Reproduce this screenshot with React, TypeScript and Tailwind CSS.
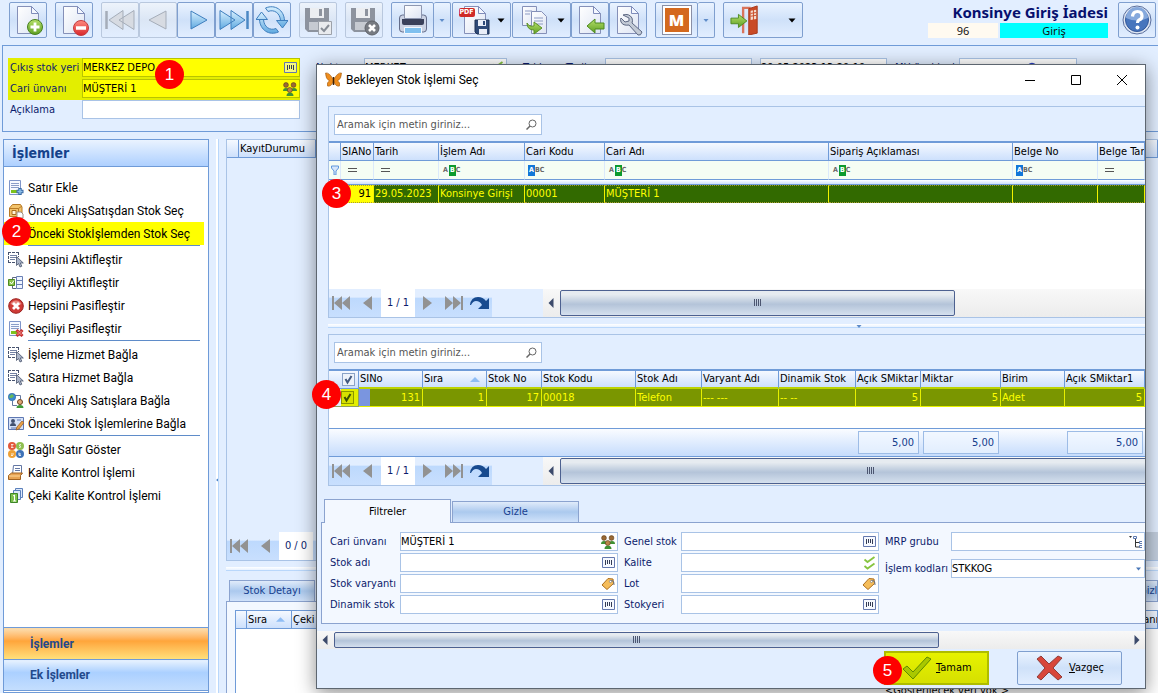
import { useState } from "react";
import type { ReactNode } from "react";

const tahoma = "font-['DejaVu_Sans_Condensed','DejaVu_Sans',sans-serif]";
const segoe = "font-['Noto_Sans','Open_Sans',sans-serif]";
const roboto = "font-[Roboto,'Open_Sans',sans-serif]";

/* ---------- toolbar icons ---------- */

function Svg({ children, size = 32 }: { children: ReactNode; size?: number }) {
  return (
    <svg width={size} height={size} viewBox="0 0 32 32" className="shrink-0" aria-hidden="true">
      <defs>
        <linearGradient id="paper" x1="0" y1="0" x2="1" y2="1">
          <stop offset="0" stopColor="#ffffff" />
          <stop offset="1" stopColor="#dde4f3" />
        </linearGradient>
        <linearGradient id="blue" x1="0" y1="0" x2="0" y2="1">
          <stop offset="0" stopColor="#d8f0ff" />
          <stop offset="1" stopColor="#5fa9e0" />
        </linearGradient>
        <linearGradient id="green" x1="0" y1="0" x2="0" y2="1">
          <stop offset="0" stopColor="#b5e06a" />
          <stop offset="1" stopColor="#5f9f22" />
        </linearGradient>
        <linearGradient id="red" x1="0" y1="0" x2="0" y2="1">
          <stop offset="0" stopColor="#ff8a80" />
          <stop offset="1" stopColor="#d8262a" />
        </linearGradient>
      </defs>
      {children}
    </svg>
  );
}

const Page = () => (
  <>
    <path d="M5.500 2.500h14l7 7v20h-21z" fill="url(#paper)" stroke="#8590b8" />
    <path d="M19.500 2.500v7h7z" fill="#f4f7ff" stroke="#7f8cba" />
  </>
);

const NewIcon = () => (
  <Svg>
    <Page />
    <circle cx="23" cy="23" r="7.500" fill="url(#green)" stroke="#467f1e" />
    <path d="M23 18.500v9M18.500 23h9" stroke="#fff" strokeWidth="2.800" />
  </Svg>
);

const DeleteIcon = () => (
  <Svg>
    <Page />
    <circle cx="23" cy="24" r="7.500" fill="url(#red)" stroke="#c33b40" />
    <path d="M18 24h10" stroke="#fff" strokeWidth="3.500" />
  </Svg>
);

const FirstIcon = () => (
  <Svg>
    <path d="M2.500 7v18" stroke="#a5adb9" strokeWidth="2.500" />
    <path d="M5 16L19 6.500v19zM15 16L30 6.500v19z" fill="#d7dbe2" stroke="#a5adb9" />
  </Svg>
);

const PrevIcon = () => (
  <Svg>
    <path d="M7 16L24 7v18z" fill="#d7dbe2" stroke="#a5adb9" />
  </Svg>
);

const NextIcon = () => (
  <Svg>
    <path d="M27 16L11 7v18z" fill="url(#blue)" stroke="#3f7fbe" />
  </Svg>
);

const LastIcon = () => (
  <Svg>
    <path d="M29.500 7v18" stroke="#4c88c4" strokeWidth="2.500" />
    <path d="M17 16L2 6.500v19zM27 16L13 6.500v19z" fill="url(#blue)" stroke="#3f7fbe" />
  </Svg>
);

const RefreshIcon = () => (
  <Svg>
    <path d="M3 15.500h4.500C8 23 14 27 20 24.500l2.500 3.500C13 32 4 26 3.500 15.500H0L5.500 8l6 7.500z" fill="url(#blue)" stroke="#3f7fbe" />
    <path d="M29 16.500h-4.500C24 9 18 5 12 7.500L9.500 4C19 0 28 6 28.500 16.500H32L26.500 24l-6-7.500z" fill="url(#blue)" stroke="#3f7fbe" />
  </Svg>
);

const Floppy = () => (
  <>
    <path d="M3 4h24v24H6l-3-3z" fill="#8d939e" />
    <path d="M8 4h14v10H8z" fill="#eceef1" />
    <path d="M17 5h3v7h-3z" fill="#8d939e" />
    <path d="M7 18h16v8H7z" fill="#c6cad1" />
  </>
);

const SaveIcon = () => (
  <Svg>
    <Floppy />
    <path d="M16.500 17.500h13v13h-13z" fill="#e9ebee" stroke="#9da2aa" />
    <path d="M19 24l3 3 5-6" fill="none" stroke="#878d96" strokeWidth="2" />
  </Svg>
);

const SaveCloseIcon = () => (
  <Svg>
    <Floppy />
    <circle cx="24" cy="24" r="7" fill="#777b82" stroke="#5f636a" />
    <path d="M21 21l6 6M27 21l-6 6" stroke="#fff" strokeWidth="2.600" />
  </Svg>
);

const PrintIcon = () => (
  <Svg>
    <path d="M2.500 14q0-3 3-3h21q3 0 3 3v11q0 3-3 3h-21q-3 0-3-3z" fill="#cbd2e3" stroke="#636c8a" />
    <path d="M7.500 1.500h17v13h-17z" fill="url(#paper)" stroke="#8e97b0" />
    <path d="M5 15h22v4q0 2-2 2H7q-2 0-2-2z" fill="#39405a" />
    <path d="M7.500 23.500h17v6h-17z" fill="#7fc0ef" stroke="#f4f8ff" />
  </Svg>
);

const PdfIcon = () => (
  <span className="relative">
    <Svg>
      <Page />
      <path d="M16 16h14v14H18l-2-2z" fill="#2f4a78" stroke="#1f3255" />
      <path d="M19 16h8v6h-8zM20 25h8v5h-8z" fill="#e9eef8" />
      <path d="M24 17h2v4h-2z" fill="#2f4a78" />
    </Svg>
    <span className="absolute top-1 left-0 rounded-xs bg-[#cf2a27] px-px text-[7px] leading-[9px] font-bold text-white">
      PDF
    </span>
  </span>
);

const CopyIcon = () => (
  <Svg>
    <path d="M3.500 2.500h14v19h-14z" fill="url(#paper)" stroke="#8590b8" />
    <path d="M12.500 7.500h10l5 5v17h-15z" fill="url(#paper)" stroke="#8590b8" />
    <path d="M6 7h7M6 10h5M15 14h9M15 17h9M15 20h9" stroke="#8c9bc4" />
    <path d="M8 19q2 4 7 3v-4l8 6-8 6v-4q-7 0-7-7z" fill="url(#green)" stroke="#5c9127" />
  </Svg>
);

const ImportIcon = () => (
  <Svg>
    <Page />
    <path d="M13 22l8-7v4h9v6h-9v4z" fill="url(#green)" stroke="#4d8a20" />
  </Svg>
);

const WrenchIcon = () => (
  <Svg>
    <Page />
    <path
      d="M11 11q6-2 9 3 1 3 0 5l10 9q-1 4-4 3l-9-10q-6 1-8-3-1-3 0-4l4 4 4-1 0-3z"
      fill="#c3cad6"
      stroke="#5d6883"
    />
  </Svg>
);

const ExitIcon = () => (
  <Svg size={30}>
    <path d="M14 30V3h8" fill="none" stroke="#d9745c" strokeWidth="2.500" />
    <path d="M20 4l9-3v29l-9 2z" fill="#c94a26" stroke="#a5371a" />
    <path d="M22 6l6-1v10l-6 1z" fill="#f4dccf" />
    <path d="M25 5v11M22 9l6-1M22 12l6-1" stroke="#c94a26" />
    <path d="M1 14h8v-4l9 7-9 7v-4H1z" fill="url(#green)" stroke="#4d8a20" />
  </Svg>
);

const HelpIcon = () => (
  <Svg>
    <circle cx="16" cy="16" r="14" fill="#dfe6f2" stroke="#5a6f9e" />
    <circle cx="16" cy="16" r="11.500" fill="#4775bd" stroke="#32579a" />
    <path d="M5 14a11 11 0 0 1 22 0q-11 5-22 0z" fill="#85a8dc" />
    <path d="M11.500 12.500q.5-5 5-5t4.500 4.500q0 3-3 4-1.500.800-1.500 3" fill="none" stroke="#fff" strokeWidth="3.200" />
    <circle cx="16.500" cy="23.500" r="2" fill="#fff" />
  </Svg>
);

/* ---------- small icons ---------- */

function Small({ children }: { children: ReactNode }) {
  return (
    <svg width="16" height="16" viewBox="0 0 16 16" className="shrink-0" aria-hidden="true">
      {children}
    </svg>
  );
}

const ListLines = () => (
  <>
    <path d="M1.500.500h11v14h-11z" fill="#f7f9ff" stroke="#7f95c9" />
    <path d="M3 3.500h8M3 5.500h8M3 7.500h8" stroke="#8b9dc8" />
    <path d="M3 10h6v3H3z" fill="#7dc21e" />
  </>
);

const smallIcons: Record<string, ReactNode> = {
  add: (
    <Small>
      <ListLines />
      <path d="M12 8v7M8.500 11.500h7" stroke="#3b6ba6" strokeWidth="3.400" />
      <path d="M12 9v5M9.500 11.500h5" stroke="#8fc0ea" strokeWidth="1.400" />
    </Small>
  ),
  box: (
    <Small>
      <path d="M1.500 5l3-3.500h8L14 4v9.500H1.500z" fill="#f2c36b" stroke="#b87a25" />
      <path d="M1.500 5.500h9v8M10.500 5.500L14 3" fill="none" stroke="#b87a25" />
      <path d="M4 7.500h4v4H4z" fill="#fff4d8" stroke="#a76c1f" />
      <path d="M9 9h4l2 2v4H9z" fill="#fff" stroke="#9a8f86" />
    </Small>
  ),
  select: (
    <Small>
      <path d="M0 .500h11M.500 0v10M0 10.500h7M10.500 0v5" stroke="#47536f" strokeDasharray="3 1" fill="none" />
      <path d="M2 3.500h7M2 5.500h7M2 7.500h5" stroke="#7381a3" />
      <path d="M8.500 4.500v9l2-2 1.500 3.500 1.800-.800-1.500-3.200h3z" fill="#aab4c8" stroke="#48536c" strokeWidth=".8" />
    </Small>
  ),
  active: (
    <Small>
      <path d="M8.500 1.500h6v12h-6zM8.500 5.500h6M8.500 9.500h6" fill="#eef4ff" stroke="#6a80b5" />
      <path d="M8 2.500H4.500v3M8 13.500H4.500v-3" fill="none" stroke="#5c6880" />
      <path d="M.500 4.500h6v6h-6z" fill="#8bc34a" stroke="#4e8a1f" />
      <path d="M2 7l1.500 2L6 5.500" fill="none" stroke="#fff" />
    </Small>
  ),
  cancel: (
    <Small>
      <circle cx="8" cy="8" r="7.300" fill="#cf3b36" stroke="#9c2220" />
      <path d="M2.500 6a6 6 0 0 1 11 0q-5 3-11 0z" fill="#e98880" />
      <path d="M5 5l6 6M11 5l-6 6" stroke="#fff" strokeWidth="2.800" />
    </Small>
  ),
  remove: (
    <Small>
      <ListLines />
      <path d="M8.500 9l6 6M14.500 9l-6 6" stroke="#c83232" strokeWidth="3" />
      <path d="M9.500 10l4 4M13.500 10l-4 4" stroke="#f39a92" />
    </Small>
  ),
  globe: (
    <Small>
      <path d="M4.500 8v4.500H9M7 2.500h5.500V6" fill="none" stroke="#64789f" />
      <circle cx="4" cy="4" r="3.700" fill="#3a8ad0" stroke="#2761a0" strokeWidth=".6" />
      <path d="M1.500 3l2.500-2 2 2-2 2-2.500 0z" fill="#68b85a" />
      <circle cx="12" cy="9" r="2.500" fill="#e0a776" stroke="#6a4020" />
      <path d="M8.500 15q0-3 3.500-3t3.500 3z" fill="#3f9a3a" />
    </Small>
  ),
  card: (
    <Small>
      <path d="M.500 1.500h15v12H.500z" fill="#d5e1f7" stroke="#5e78b3" />
      <circle cx="5" cy="5" r="2" fill="#41506f" />
      <path d="M2 10q0-3 3-3t3 3z" fill="#41506f" />
      <path d="M3 12h6M9 4h4" stroke="#5e78b3" />
      <path d="M8 14l1-3 5-6 2 1.500-5 6.500z" fill="#e8a24a" stroke="#94561c" strokeWidth=".7" />
    </Small>
  ),
  coins: (
    <Small>
      <circle cx="4" cy="4" r="4" fill="#e2583a" />
      <circle cx="12" cy="4" r="4" fill="#8fbf4f" />
      <circle cx="4" cy="12" r="4" fill="#efa136" />
      <circle cx="12" cy="12" r="4" fill="#3f73b8" />
      <path d="M3 2.500h2.500M3 4h2M3 5.500h2.500M11 5.500q3 0 1-1.500t1-1.500M3 12h3M3 13.500h2M11 10.500v3h2M10.500 12H13" fill="none" stroke="#fff" strokeWidth=".8" />
    </Small>
  ),
  tray: (
    <Small>
      <path d="M5.500.500h8v9h-9z" fill="#fff" stroke="#6377a4" />
      <path d="M7 3.500h5M7 5.500h5" stroke="#6377a4" />
      <path d="M.500 10.500l3-2.500h11l-2 2.500v4H.500z" fill="#e7a252" stroke="#a1611f" />
      <path d="M1 11h11" stroke="#ffd99a" />
    </Small>
  ),
  stack: (
    <Small>
      <path d="M7.500.500h7v9h-7z" fill="#dce8fb" stroke="#5b80bb" />
      <path d="M5.500 2.500h7v9h-7z" fill="#dce8fb" stroke="#5b80bb" />
      <path d="M2.500 5.500h7v9h-7z" fill="#7cc04c" stroke="#3d8627" />
      <path d="M5 8l1.500-1v6M5 13h3" fill="none" stroke="#fff" />
    </Small>
  ),
  barcode: (
    <svg width="14" height="12" viewBox="0 0 14 12" aria-hidden="true">
      <path d="M1.500.500h12v10H1.500z" fill="#eef3ff" fillOpacity=".5" stroke="#6478ae" />
      <path d="M4.500 3v5M6.500 3v4M8.500 3v4M10.500 3v5" stroke="#343c55" />
    </svg>
  ),
  people: (
    <svg width="14" height="14" viewBox="0 0 14 14" aria-hidden="true">
      <circle cx="3" cy="3" r="2.400" fill="#9a6a35" stroke="#5e3c17" strokeWidth=".6" />
      <circle cx="10.500" cy="3" r="2.400" fill="#9a6a35" stroke="#5e3c17" strokeWidth=".6" />
      <path d="M0 9q0-3 3-3t3 3zM8 9q0-3 3-3t3 3zM3.500 14q0-3.500 3.500-3.500t3.500 3.500z" fill="#3f9133" />
      <circle cx="6.800" cy="8" r="2.500" fill="#b98347" stroke="#5e3c17" strokeWidth=".6" />
    </svg>
  ),
  tag: (
    <svg width="14" height="14" viewBox="0 0 14 14" aria-hidden="true">
      <path d="M1 8l6-6.500 5 .500.500 4.500L6 12.500z" fill="#f5bd5b" stroke="#ad6f1e" />
      <path d="M9 4q4-2 4 4" fill="none" stroke="#666f80" />
      <circle cx="9.500" cy="4.500" r="1.100" fill="#fff" stroke="#666f80" strokeWidth=".6" />
    </svg>
  ),
  checks: (
    <svg width="13" height="14" viewBox="0 0 13 14" aria-hidden="true">
      <path d="M1.500 3.500l3 2.500 7-5M1.500 10l3 2.500 7-5" fill="none" stroke="#87c540" strokeWidth="1.800" />
    </svg>
  ),
  tree: (
    <svg width="14" height="14" viewBox="0 0 14 14" aria-hidden="true">
      <path d="M1 1h3L2.500 3z" fill="#333" />
      <path d="M7.500 4v8H12M7.500 7.500H12" fill="none" stroke="#333" />
      <path d="M5.500 1.500h3v2h-3zM11.500 6.500h3v2h-3zM11.500 10.500h3v2h-3z" fill="#fff" stroke="#5b78b0" />
    </svg>
  ),
  combo: (
    <svg width="7" height="14" viewBox="0 0 7 14" aria-hidden="true">
      <path d="M1 5.500h5L3.500 8.500z" fill="#4a78b8" />
    </svg>
  ),
  lookup: (
    <svg width="48" height="12" viewBox="0 0 48 12" aria-hidden="true">
      <circle cx="6" cy="6" r="4.500" fill="#fff" stroke="#2a3fc0" strokeWidth="1.500" />
      <circle cx="6" cy="6" r="1.500" fill="none" stroke="#2a3fc0" />
      <path d="M18.500 2.500h9v8h-9z" fill="#7fb0dc" stroke="#46617f" />
    </svg>
  ),
};

/* ---------- shared pieces ---------- */

function Caret({ dark = false }: { dark?: boolean }) {
  return (
    <svg width="8" height="5" viewBox="0 0 8 5" className={dark ? "text-black" : "text-[#5f8cc9]"} aria-hidden="true">
      {dark ? <path d="M.500.500h7L4 4.500z" fill="currentColor" /> : <path d="M1.500 1h5L4 4z" fill="currentColor" />}
    </svg>
  );
}

const toolFrame = "flex h-9 items-center rounded-xs border";
const toolOn = "border-[#7f9fcf] bg-linear-to-b from-[#eaf3ff] via-[#cfe1f9] to-[#e2eeff]";
const toolOff = "border-[#b9c8de] bg-linear-to-b from-[#edf3fb] via-[#dbe6f5] to-[#e2eeff]";

function Tool({ label, off, children }: { label: string; off?: boolean; children: ReactNode }) {
  return (
    <button type="button" aria-label={label} className={`${toolFrame} w-[38px] justify-center ${off ? toolOff : toolOn}`}>
      {children}
    </button>
  );
}

function SplitTool({ label, children }: { label: string; children: ReactNode }) {
  return (
    <div className="flex">
      <button type="button" aria-label={label} className={`${toolFrame} w-[43px] justify-center ${toolOn}`}>
        {children}
      </button>
      <button type="button" aria-label={`${label} menu`} className={`${toolFrame} w-[17px] justify-center border-l-0 ${toolOn}`}>
        <Caret />
      </button>
    </div>
  );
}

function Badge({ n, className }: { n: number; className: string }) {
  return (
    <span
      className={`absolute z-30 flex size-[29px] items-center justify-center rounded-full bg-[#fe0000] font-['Liberation_Sans',sans-serif] text-[17px] leading-none text-white ${className}`}
    >
      {n}
    </span>
  );
}

function Field({
  id,
  label,
  icon,
  value = "",
  labelClass = "w-[70px]",
  marked,
}: {
  id: string;
  label: string;
  icon?: string;
  value?: string;
  labelClass?: string;
  marked?: boolean;
}) {
  return (
    <div className={`flex h-[21px] items-start ${marked ? "bg-[#e3ee00]" : ""}`}>
      <label htmlFor={id} className={`shrink-0 leading-[19px] whitespace-nowrap text-[#0c1c6c] ${labelClass}`}>
        {label}
      </label>
      <div
        className={`flex h-[19px] min-w-0 flex-1 items-center border pr-0.5 ${
          marked ? "border-[#b8c400] bg-[#ffff00]" : "border-[#a9c3e6] bg-white"
        }`}
      >
        <input id={id} defaultValue={value} className="h-full min-w-0 flex-1 bg-transparent text-black outline-none" />
        {icon && smallIcons[icon]}
      </div>
    </div>
  );
}

function Search({ id }: { id: string }) {
  return (
    <div className="mt-[7px] mb-[6px] ml-[5px] flex h-[21px] w-52 items-center border border-[#a9c3e6] bg-white pr-1">
      <input
        id={id}
        aria-label="Aramak için metin giriniz"
        placeholder="Aramak için metin giriniz..."
        className="min-w-0 flex-1 px-0.5 outline-none placeholder:text-[#555]"
      />
      <svg width="11" height="11" viewBox="0 0 11 11" aria-hidden="true">
        <circle cx="6.500" cy="4.500" r="3.500" fill="none" stroke="#666" />
        <path d="M4 7L.500 10.500" stroke="#666" strokeWidth="1.500" />
      </svg>
    </div>
  );
}

const navFill = "bg-linear-to-b from-[#e2eeff] from-30% via-[#bdd9fd] via-31% to-[#c8dffe]";

function NavGlyph({ d }: { d: string }) {
  return (
    <svg width="20" height="16" viewBox="0 0 20 16" aria-hidden="true">
      <path d={d} fill="#929292" />
    </svg>
  );
}

function Pager({ text }: { text: string }) {
  return (
    <div className="flex h-7 w-[163px] shrink-0">
      <div className={`flex w-[52px] items-center gap-2 pl-0.5 ${navFill}`}>
        <button type="button" aria-label="İlk"><NavGlyph d="M1 1h2v14H1zM3 8l8-7v14zM11 8l8-7v14z" /></button>
        <button type="button" aria-label="Önceki"><NavGlyph d="M4 8l9-7v14z" /></button>
      </div>
      <div className="flex w-[34px] items-center justify-center bg-white text-[#0c1c6c]">{text}</div>
      <div className={`flex w-[77px] items-center gap-1.5 pl-[3px] ${navFill}`}>
        <button type="button" aria-label="Sonraki"><NavGlyph d="M14 8L5 1v14z" /></button>
        <button type="button" aria-label="Son"><NavGlyph d="M17 1h2v14h-2zM17 8L9 1v14zM9 8L1 1v14z" /></button>
        <button type="button" aria-label="Git">
          <svg width="20" height="14" viewBox="0 0 20 14" aria-hidden="true">
            <path d="M0 9Q1 1 8 1q5 0 8 4l3-3v11H8l4-4Q10 5 6 5 3 5 1 9z" fill="#174a8f" />
          </svg>
        </button>
      </div>
    </div>
  );
}

function Thumb({ className }: { className: string }) {
  return (
    <div
      className={`flex items-center justify-center rounded-xs border border-[#4d6190] bg-linear-to-b from-[#e6ebf0] from-15% via-[#b4c4d9] via-55% to-[#d5e0ee] ${className}`}
    >
      <svg width="8" height="8" viewBox="0 0 8 8" aria-hidden="true">
        <path d="M.500 0v7M2.500 0v7M4.500 0v7M6.500 0v7" stroke="#4b5570" />
      </svg>
    </div>
  );
}

function Arrow({ right }: { right?: boolean }) {
  return (
    <svg width="6" height="10" viewBox="0 0 6 10" aria-hidden="true">
      <path d={right ? "M.500 0v10L5.500 5z" : "M5.500 0v10L.500 5z"} fill="#3c4a6b" />
    </svg>
  );
}

function GridScroll({ full }: { full?: boolean }) {
  return (
    <div className="ml-[51px] flex min-w-0 flex-1 items-center bg-linear-to-b from-[#f8f8f8] to-[#ececec] pl-[5px]">
      <div className="mr-[6px] flex shrink-0">
        <Arrow />
      </div>
      <Thumb className={full ? "h-[26px] w-[622px] shrink-0" : "h-[26px] w-[395px] shrink-0"} />
    </div>
  );
}

function Splitter({ arrow }: { arrow?: boolean }) {
  return (
    <div className="my-1.5 flex h-1 justify-center border-b border-[#b9d7fb] bg-linear-to-b from-white to-[#e8f2ff]">
      {arrow && (
        <span className="ml-[245px] flex">
          <Caret />
        </span>
      )}
    </div>
  );
}

const th = "h-[18px] overflow-hidden border-r border-b border-[#6f9bd8] p-0 pl-px text-left font-normal whitespace-nowrap bg-linear-to-b from-[#f5f9ff] to-[#cde0fc]";

function FilterMark({ kind }: { kind: string }) {
  if (kind === "eq") {
    return <span className="ml-[5px] block h-1 w-[9px] border-y border-[#555]" />;
  }
  return (
    <span className="ml-px flex items-center text-[7px] leading-[11px] font-bold text-[#666]">
      <span className={kind === "a" ? "bg-[#1277d8] px-px text-white" : "px-px"}>A</span>
      <span className={kind === "b" ? "bg-[#0b9a2c] px-px text-white" : ""}>B</span>
      <span>C</span>
    </span>
  );
}

const pendingCols = [
  { w: "w-[12px]", name: "", filter: "", value: "" },
  { w: "w-[33px]", name: "SIANo", filter: "eq", value: "91" },
  { w: "w-[65px]", name: "Tarih", filter: "eq", value: "29.05.2023" },
  { w: "w-[86px]", name: "İşlem Adı", filter: "b", value: "Konsinye Girişi" },
  { w: "w-[80px]", name: "Cari Kodu", filter: "a", value: "00001" },
  { w: "w-[224px]", name: "Cari Adı", filter: "b", value: "MÜŞTERİ 1" },
  { w: "w-[184px]", name: "Sipariş Açıklaması", filter: "b", value: "" },
  { w: "w-[85px]", name: "Belge No", filter: "a", value: "" },
  { w: "", name: "Belge Tarihi", filter: "eq", value: "" },
];

function PendingTable() {
  return (
    <table className="w-full table-fixed border-separate border-spacing-0 border-t-2 border-[#6f9bd8]">
      <colgroup>
        {pendingCols.map((c) => (
          <col key={c.name} className={c.w} />
        ))}
      </colgroup>
      <thead>
        <tr>
          {pendingCols.map((c) => (
            <th key={c.name} className={th}>{c.name}</th>
          ))}
        </tr>
        <tr>
          {pendingCols.map((c) => (
            <td key={c.name} className="h-[19px] border-r border-b border-r-[#dbe9fb] border-b-[#6f9bd8] bg-[#f5fdf4] p-0 pl-0.5">
              {c.filter ? (
                <FilterMark kind={c.filter} />
              ) : (
                <svg width="8" height="10" viewBox="0 0 8 10" aria-hidden="true">
                  <path d="M.500 1h7v2L5 6v4H3V6L.500 3z" fill="#d5e6fb" stroke="#5f97dc" />
                </svg>
              )}
            </td>
          ))}
        </tr>
        <tr>
          <td colSpan={9} className="h-[5px] border-b border-[#6f9bd8] bg-linear-to-b from-white to-[#cde0fc] p-0" />
        </tr>
      </thead>
      <tbody>
        <tr>
          {pendingCols.map((c, i) => (
            <td
              key={c.name}
              className={`h-[18px] overflow-hidden border-r border-y border-y-[#a89a30] border-r-[#f2f200] border-dotted [border-right-style:solid] p-0 whitespace-nowrap ${
                i < 2 ? "bg-[#ffff00] pr-0.5 text-right text-black" : "bg-[#326a00] pl-px text-[#ffff00]"
              }`}
            >
              {c.value}
            </td>
          ))}
        </tr>
      </tbody>
    </table>
  );
}

const stockCols = [
  { w: "w-[64px]", name: "SINo", value: "131", right: true },
  { w: "w-[64px]", name: "Sıra", value: "1", right: true },
  { w: "w-[55px]", name: "Stok No", value: "17", right: true },
  { w: "w-[94px]", name: "Stok Kodu", value: "00018" },
  { w: "w-[66px]", name: "Stok Adı", value: "Telefon" },
  { w: "w-[77px]", name: "Varyant Adı", value: "--- ---" },
  { w: "w-[77px]", name: "Dinamik Stok", value: "-- --" },
  { w: "w-[65px]", name: "Açık SMiktar", value: "5", right: true, total: "5,00" },
  { w: "w-[80px]", name: "Miktar", value: "5", right: true, total: "5,00" },
  { w: "w-[64px]", name: "Birim", value: "Adet" },
  { w: "", name: "Açık SMiktar1", value: "5", right: true, total: "5,00" },
];

function Tick({ label, marked }: { label: string; marked?: boolean }) {
  const [checked, setChecked] = useState(true);
  return (
    <span className="relative ml-3 block size-[13px]">
      <input
        type="checkbox"
        aria-label={label}
        checked={checked}
        onChange={(e) => setChecked(e.target.checked)}
        className={`absolute inset-0 size-[13px] appearance-none border ${
          marked ? "border-[#8a9600] bg-[#d6e000]" : "border-[#8ba3c7] bg-[#eef3fa]"
        }`}
      />
      {checked && (
        <svg width="13" height="13" viewBox="0 0 13 13" className="pointer-events-none absolute inset-0" aria-hidden="true">
          <path d="M3.500 6l2 3.500L9.500 3" fill="none" stroke={marked ? "#3b5200" : "#42597f"} strokeWidth="2" />
        </svg>
      )}
    </span>
  );
}

function StockTable() {
  return (
    <table className="w-full table-fixed border-separate border-spacing-0 border-t-2 border-[#6f9bd8]">
      <colgroup>
        <col className="w-[30px]" />
        {stockCols.map((c) => (
          <col key={c.name} className={c.w} />
        ))}
      </colgroup>
      <thead>
        <tr>
          <th className={th}><Tick label="Tümünü seç" /></th>
          {stockCols.map((c) => (
            <th key={c.name} className={`${th} border-b-2 border-b-[#bcd300]`}>
              <span className="flex items-center justify-between">
                {c.name}
                {c.name === "Sıra" && (
                  <svg width="10" height="5" viewBox="0 0 10 5" className="mr-1.5" aria-hidden="true">
                    <path d="M0 5l5-5 5 5z" fill="#8fbdf5" />
                  </svg>
                )}
              </span>
            </th>
          ))}
        </tr>
      </thead>
      <tbody>
        <tr>
          <td className="h-[18px] border-r border-b border-[#8f9f60] bg-linear-to-r from-[#e2eeff] from-[12px] to-[#e3ee00] to-[12px] p-0">
            <Tick label="Satırı seç" marked />
          </td>
          {stockCols.map((c, i) => (
            <td
              key={c.name}
              className={`overflow-hidden border-r border-b border-[#e6f000] p-0 whitespace-nowrap text-[#ffff00] ${
                i === 0 ? "bg-linear-to-r from-[#7a95df] from-[11px] to-[#7a9600] to-[11px]" : "bg-[#7a9600]"
              } ${c.right ? "pr-0.5 text-right" : "pl-px"}`}
            >
              {c.value}
            </td>
          ))}
        </tr>
        <tr>
          <td colSpan={12} className="h-[21px] bg-white p-0" />
        </tr>
      </tbody>
      <tfoot>
        <tr>
          {[{ name: "", total: "" }, ...stockCols].map((c) => (
            <td key={c.name} className="h-[29px] border-y border-[#6f9bd8] bg-linear-to-b from-[#fafcff] to-[#c6dcfc] p-0">
              {c.total && (
                <span className="mx-0.5 block h-[23px] border border-[#9dbce6] bg-[#f0f6ff]/60 pr-1 text-right text-[11px] leading-[21px] text-[#143c8c]">
                  {c.total}
                </span>
              )}
            </td>
          ))}
        </tr>
      </tfoot>
    </table>
  );
}

/* ---------- dialog ---------- */

function Dialog() {
  return (
    <section
      role="dialog"
      aria-label="Bekleyen Stok İşlemi Seç"
      className="absolute top-16 right-3 left-[316px] z-20 border border-[#5d6670] bg-[#e2eeff] shadow-[0_4px_18px_rgba(0,0,0,0.45)]"
    >
      <header className={`flex h-[30px] items-center bg-white ${roboto} text-xs text-black`}>
        <svg width="17" height="16" viewBox="0 0 17 16" className="mr-1 ml-2" aria-hidden="true">
          <path d="M8 7Q4 0 .500 1q0 6 4 8-3 1-2 5 4 1 6-5 2 6 6 5 1-4-2-5 4-2 4-8Q13 0 9 7z" fill="#ef8d1c" stroke="#a05a14" strokeWidth=".6" />
          <path d="M8.500 5v8" stroke="#3c2208" strokeWidth="1.500" />
        </svg>
        <h2 className="flex-1">Bekleyen Stok İşlemi Seç</h2>
        <div className="mr-[17px] flex gap-[34px]">
          <button type="button" aria-label="Simge durumuna küçült">
            <svg width="12" height="12" viewBox="0 0 12 12"><path d="M1 6.500h10" stroke="#000" /></svg>
          </button>
          <button type="button" aria-label="Ekranı kapla">
            <svg width="12" height="12" viewBox="0 0 12 12"><path d="M1.500 1.500h9v9h-9z" fill="none" stroke="#000" /></svg>
          </button>
          <button type="button" aria-label="Kapat">
            <svg width="12" height="12" viewBox="0 0 12 12"><path d="M1 1l10 10M11 1L1 11" stroke="#000" /></svg>
          </button>
        </div>
      </header>

      <div className="overflow-hidden">
        <div className="pt-[11px] pl-[11px]">
          <div className="border-y border-l border-[#a9c3e6]">
            <Search id="search-pending" />
            <PendingTable />
            <div className="h-[86px] bg-white" />
            <div className="flex">
              <Pager text="1 / 1" />
              <GridScroll />
            </div>
          </div>
          <Splitter arrow />
          <div className="border-y border-l border-[#a9c3e6]">
            <Search id="search-stock" />
            <StockTable />
            <div className="flex">
              <Pager text="1 / 1" />
              <GridScroll full />
            </div>
          </div>
        </div>

        <div className="mt-[13px] pl-1">
          <div className="flex items-end pl-[3px]" role="tablist">
            <button type="button" role="tab" aria-selected="true" className="relative z-10 -mb-px h-6 w-[127px] border border-b-0 border-[#8ba3cf] bg-[#f3f8ff] text-black">
              Filtreler
            </button>
            <button type="button" role="tab" aria-selected="false" className="ml-px h-[21px] w-[127px] border border-b-0 border-[#8ba3cf] bg-linear-to-b from-[#e0ebfa] via-[#abc9ee] to-[#d0e2fa] text-[#17418f]">
              Gizle
            </button>
          </div>
          <form className="flex h-[102px] gap-1.5 border-y border-l border-[#8ba3cf] bg-[#f3f8ff] pt-[9px] pl-2">
            <div className="w-72 shrink-0">
              <Field id="f-cari" label="Cari ünvanı" value="MÜŞTERİ 1" icon="people" />
              <Field id="f-stok" label="Stok adı" icon="barcode" />
              <Field id="f-varyant" label="Stok varyantı" icon="tag" />
              <Field id="f-dinamik" label="Dinamik stok" icon="barcode" />
            </div>
            <div className="w-[255px] shrink-0">
              <Field id="f-genel" label="Genel stok" labelClass="w-[57px]" icon="barcode" />
              <Field id="f-kalite" label="Kalite" labelClass="w-[57px]" icon="checks" />
              <Field id="f-lot" label="Lot" labelClass="w-[57px]" icon="tag" />
              <Field id="f-yer" label="Stokyeri" labelClass="w-[57px]" icon="barcode" />
            </div>
            <div className="flex min-w-0 flex-1 flex-col gap-1.5">
              <Field id="f-mrp" label="MRP grubu" labelClass="w-[66px]" icon="tree" />
              <Field id="f-kod" label="İşlem kodları" labelClass="w-[66px]" value="STKKOG" icon="combo" />
            </div>
          </form>
        </div>

        <div className="mt-[7px] flex h-[18px] items-center bg-linear-to-b from-[#f8f8f8] to-[#ececec] px-[5px]">
          <Arrow />
          <Thumb className="ml-1.5 h-4 w-[605px]" />
          <span className="ml-auto"><Arrow right /></span>
        </div>

        <div className="flex justify-end gap-7 pt-0.5 pr-[23px] pb-[3px]">
          <button type="button" className="flex h-[34px] w-[105px] items-center gap-1 border-2 border-[#aebc00] bg-linear-to-b from-[#e6f200] to-[#d6e000] pl-4 text-black">
            <svg width="30" height="26" viewBox="0 0 30 26" aria-hidden="true">
              <path d="M1 14l4-3 6 6L25 2l4 2-18 20z" fill="#a9c800" stroke="#5e8a00" />
            </svg>
            <span><u>T</u>amam</span>
          </button>
          <button type="button" className="flex h-[34px] w-[105px] items-center gap-1.5 rounded-xs border border-[#7f9fcf] bg-linear-to-b from-[#eaf3ff] via-[#cfe1f9] to-[#e2eeff] pl-[18px] text-black">
            <svg width="27" height="26" viewBox="0 0 27 26" aria-hidden="true">
              <path d="M1 4l4-3 8 8 9-8 4 2-9 10 9 9-4 3-9-8-8 8-4-3 8-9z" fill="#d8463a" stroke="#8f3c38" />
            </svg>
            <span><u>V</u>azgeç</span>
          </button>
        </div>
      </div>
      <Badge n={3} className="top-[114px] left-[5px]" />
      <Badge n={4} className="top-[315px] left-[-5px]" />
      <Badge n={5} className="right-[243px] bottom-[3px]" />
    </section>
  );
}

/* ---------- sidebar ---------- */

const menu = [
  [
    { icon: "add", text: "Satır Ekle" },
    { icon: "box", text: "Önceki AlışSatışdan Stok Seç" },
    { icon: "box", text: "Önceki Stokİşlemden Stok Seç", marked: true },
  ],
  [
    { icon: "select", text: "Hepsini Aktifleştir" },
    { icon: "active", text: "Seçiliyi Aktifleştir" },
    { icon: "cancel", text: "Hepsini Pasifleştir" },
    { icon: "remove", text: "Seçiliyi Pasifleştir" },
  ],
  [
    { icon: "select", text: "İşleme Hizmet Bağla" },
    { icon: "select", text: "Satıra Hizmet Bağla" },
    { icon: "globe", text: "Önceki Alış Satışlara Bağla" },
    { icon: "card", text: "Önceki Stok İşlemlerine Bağla" },
  ],
  [
    { icon: "coins", text: "Bağlı Satır Göster" },
    { icon: "tray", text: "Kalite Kontrol İşlemi" },
    { icon: "stack", text: "Çeki Kalite Kontrol İşlemi" },
  ],
];

function Sidebar() {
  return (
    <aside className="relative flex w-[206px] shrink-0 flex-col border border-[#6f9bd8] bg-white">
      <h2 className={`h-[27px] border-b border-[#6f9bd8] bg-linear-to-b from-[#eaf3ff] to-[#aed0ff] pl-2 text-[14px] leading-[26px] font-bold text-[#15428b] ${tahoma}`}>
        İşlemler
      </h2>
      <nav className={`flex-1 pt-[9px] text-xs text-black ${roboto}`}>
        {menu.map((group, g) => (
          <ul key={g} className={g < menu.length - 1 ? "mb-[3px]" : ""}>
            {group.map((item, i) => (
              <li
                key={item.text}
                className={`relative mr-1 flex h-[23px] items-center pl-1 ${"marked" in item && item.marked ? "bg-[#ffff00]" : ""}`}
              >
                {smallIcons[item.icon]}
                <a href="#" className="ml-1 whitespace-nowrap">{item.text}</a>
                {g < menu.length - 1 && i === group.length - 1 && (
                  <span className="absolute right-1 -bottom-px left-6 h-px bg-[#5f8cc9]" />
                )}
              </li>
            ))}
          </ul>
        ))}
      </nav>
      <button type="button" className={`h-8 border-t border-[#6f9bd8] bg-linear-to-b from-[#fcd9a6] from-5% via-[#ffa53a] via-42% to-[#ffe07a] pl-[26px] text-left text-xs font-bold text-[#23498c] ${roboto}`}>
        İşlemler
      </button>
      <button type="button" className={`mb-px h-8 border-y border-[#6f9bd8] bg-linear-to-b from-[#e2efff] from-5% via-[#abd0ff] via-42% to-[#c4defe] pl-[26px] text-left text-xs font-bold text-[#23498c] ${roboto}`}>
        Ek İşlemler
      </button>
      <Badge n={2} className="top-[77px] left-[-2px]" />
    </aside>
  );
}

/* ---------- page ---------- */

export default function App() {
  return (
    <div className={`relative flex h-screen flex-col overflow-hidden bg-[#e2eeff] text-[11px] leading-4 ${tahoma}`}>
      <header className="flex h-[45px] shrink-0 items-start gap-2 pt-0.5 pr-0.5 pl-[9px]">
        <Tool label="Yeni"><NewIcon /></Tool>
        <Tool label="Sil"><DeleteIcon /></Tool>
        <div className="flex">
          <Tool label="İlk kayıt" off><FirstIcon /></Tool>
          <Tool label="Önceki kayıt" off><PrevIcon /></Tool>
          <Tool label="Sonraki kayıt"><NextIcon /></Tool>
          <Tool label="Son kayıt"><LastIcon /></Tool>
          <Tool label="Yenile"><RefreshIcon /></Tool>
        </div>
        <Tool label="Kaydet" off><SaveIcon /></Tool>
        <Tool label="Kaydet ve kapat" off><SaveCloseIcon /></Tool>
        <div className="flex gap-px">
          <SplitTool label="Yazdır"><PrintIcon /></SplitTool>
          <button type="button" aria-label="PDF" className={`${toolFrame} w-[59px] justify-center gap-1.5 ${toolOn}`}>
            <PdfIcon />
            <Caret dark />
          </button>
          <div className="flex">
            <button type="button" aria-label="Kopyala" className={`${toolFrame} w-[59px] justify-center gap-1.5 ${toolOn}`}>
              <CopyIcon />
              <Caret dark />
            </button>
            <Tool label="İçe aktar"><ImportIcon /></Tool>
            <Tool label="Ayarlar"><WrenchIcon /></Tool>
          </div>
        </div>
        <SplitTool label="Mikro">
          <span className="flex size-[30px] items-center justify-center border border-[#8a8fa5] bg-white p-0.5">
            <span className="flex size-full items-center justify-center bg-[#d4691e] font-['Open_Sans',sans-serif] text-[16px] font-extrabold text-white">M</span>
          </span>
        </SplitTool>
        <button type="button" aria-label="Çıkış" className={`${toolFrame} w-20 justify-between px-1.5 ${toolOn}`}>
          <ExitIcon />
          <Caret dark />
        </button>
        <div className="mr-0.5 ml-auto flex flex-col items-end">
          <h1 className={`text-[15px] leading-[21px] font-bold whitespace-nowrap text-[#06106e] ${segoe}`}>
            Konsinye Giriş İadesi
          </h1>
          <div className={`flex gap-0.5 text-center text-[11px] leading-[15px] text-[#111] ${segoe}`}>
            <span className="w-[70px] bg-[#fffaf0]">96</span>
            <span className="w-[108px] bg-[#00ffff]">Giriş</span>
          </div>
        </div>
        <Tool label="Yardım"><HelpIcon /></Tool>
      </header>

      <section className="relative ml-0.5 flex h-[87px] shrink-0 gap-4 border border-r-0 border-[#6f9bd8] pt-3 pl-[5px]">
        <div className="w-[292px] shrink-0">
          <Field id="cikis" label="Çıkış stok yeri" labelClass="w-[74px] pl-0.5" value="MERKEZ DEPO" icon="barcode" marked />
          <Field id="cari" label="Cari ünvanı" labelClass="w-[74px] pl-0.5" value="MÜŞTERİ 1" icon="people" marked />
          <Field id="aciklama" label="Açıklama" labelClass="w-[74px] pl-0.5" />
        </div>
        <div className="w-[191px] shrink-0">
          <Field id="nokta" label="Nokta" labelClass="w-12" value="MERKEZ" icon="checks" />
        </div>
        <div className="w-[229px] shrink-0">
          <Field id="tarih-no" label="Takip no/Tarih" labelClass="w-[82px]" />
        </div>
        <div className="-ml-2 w-[127px] shrink-0">
          <Field id="tarih" label="" labelClass="w-0" value="29.05.2023 13:29:19" />
        </div>
        <div className="-ml-2 w-[182px] shrink-0">
          <Field id="mu" label="MU özel kod" labelClass="w-16" icon="lookup" />
        </div>
        <Badge n={1} className="top-[14px] left-[152px]" />
      </section>

      <div className="flex min-h-0 flex-1 pt-[7px] pl-[3px]">
        <Sidebar />
        <div className="mx-[7px] flex w-[3px] shrink-0 items-center border-r border-[#b9d7fb] bg-white">
          <svg width="4" height="6" viewBox="0 0 4 6" className="mt-32" aria-hidden="true">
            <path d="M4 0v6L0 3z" fill="#4a82c8" />
          </svg>
        </div>
        <main className="flex min-w-0 flex-1 flex-col">
          <section className="flex h-[422px] shrink-0 flex-col border border-r-0 border-[#a9c3e6]">
            <table className="w-full table-fixed border-separate border-spacing-0">
              <colgroup>
                <col className="w-3" />
                <col className="w-[77px]" />
                <col />
              </colgroup>
              <thead>
                <tr>
                  <th className={th} />
                  <th className={th}>KayıtDurumu</th>
                  <th className={th} />
                </tr>
              </thead>
            </table>
            <div className="mt-auto flex bg-[#c2cede]">
              <Pager text="0 / 0" />
            </div>
          </section>
          <Splitter />
          <div className="mt-[3px] flex shrink-0 justify-between pl-[3px]">
            <button type="button" className="h-[21px] w-[86px] border border-b-0 border-[#8ba3cf] bg-linear-to-b from-[#e0ebfa] via-[#abc9ee] to-[#d0e2fa] text-[#17418f]">
              Stok Detayı
            </button>
            <button type="button" className="h-[21px] w-11 overflow-hidden border border-b-0 border-[#8ba3cf] bg-linear-to-b from-[#e0ebfa] via-[#abc9ee] to-[#d0e2fa] pl-6 text-left text-[#17418f]">
              Gizle
            </button>
          </div>
          <section className="flex min-h-0 flex-1 flex-col border-t border-l border-[#8ba3cf] bg-[#f3f8ff] pt-2 pl-2">
            <div className="flex min-h-0 flex-1 flex-col border-t border-l border-[#6f9bd8] bg-white">
              <table className="w-full table-fixed border-separate border-spacing-0">
                <colgroup>
                  <col className="w-[11px]" />
                  <col className="w-[45px]" />
                  <col />
                  <col className="w-10" />
                </colgroup>
                <thead>
                  <tr>
                    <th className={th} />
                    <th className={th}>
                      <span className="flex items-center justify-between">
                        Sıra
                        <svg width="9" height="5" viewBox="0 0 10 5" className="mr-1.5" aria-hidden="true">
                          <path d="M0 5l5-5 5 5z" fill="#8fbdf5" />
                        </svg>
                      </span>
                    </th>
                    <th className={th}>Çeki Yeri</th>
                    <th className={th}>
                      <span className="pl-5">Tanımı</span>
                    </th>
                  </tr>
                </thead>
              </table>
              <p className="mt-auto -mb-1.5 pl-[500px] text-center">&lt;Gösterilecek veri yok &gt;</p>
            </div>
          </section>
        </main>
      </div>

      <Dialog />
    </div>
  );
}
